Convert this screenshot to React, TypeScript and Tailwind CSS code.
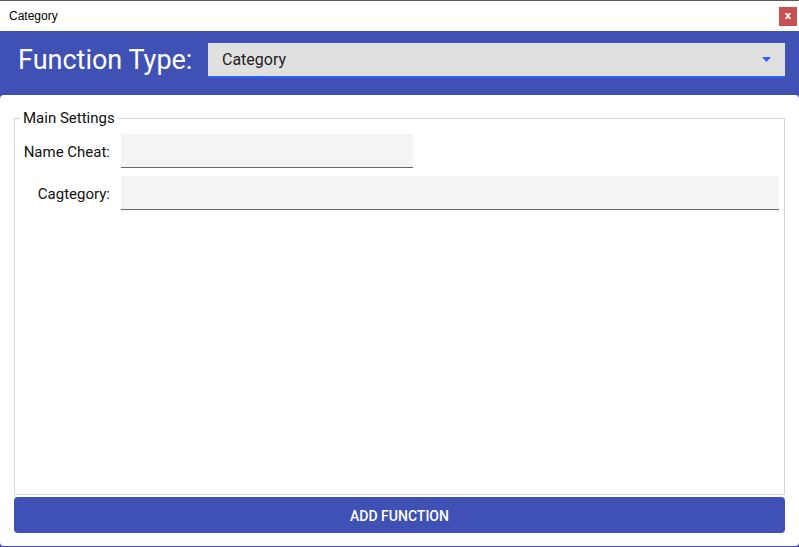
import React from 'react';

export default function App() {
  return (
    <div className="w-[799px] h-[547px] flex flex-col bg-[#3f51b5] font-['Roboto',sans-serif] overflow-hidden">
      {/* window title bar */}
      <div className="h-[31px] shrink-0 bg-white border-t border-[#5a5a5a] flex items-center justify-between pl-[9px] pr-[2px]">
        <span className="text-[12px] text-black font-['Liberation_Sans',sans-serif] leading-none">Category</span>
        <button className="w-[18px] h-[19px] bg-[#c75050] text-white text-[10px] font-bold leading-none flex items-center justify-center font-['DejaVu_Sans',sans-serif]">
          x
        </button>
      </div>

      {/* header */}
      <div className="h-[64px] shrink-0 flex items-start pt-[12px] pl-[18px] pr-[14px]">
        <span className="text-white text-[27px] leading-[35px] w-[190px] shrink-0">Function Type:</span>
        <div className="flex-1 h-[35px] bg-[#e0e0e0] border-b-2 border-[#2962ff] flex items-center justify-between pl-[14px] pr-[14px]">
          <span className="text-[16px] text-[#222]">Category</span>
          <svg width="9" height="5" viewBox="0 0 9 5">
            <path d="M0 0 H9 L4.5 5 Z" fill="#2962ff" />
          </svg>
        </div>
      </div>

      {/* main panel */}
      <div className="flex-1 bg-white rounded-[4px] mb-[1px] flex flex-col px-[14px] pt-[14px] pb-[13px]">
        <fieldset className="flex-1 border border-[#d5d5d5] px-0 m-0">
          <legend className="ml-[5px] px-[3px] text-[15px] leading-[18px] text-[#111]">Main Settings</legend>
          <div className="flex flex-col gap-[8px] pt-[7px] pr-[5px]">
            <div className="flex items-center">
              <label className="w-[95px] text-right text-[15px] text-[#111] pt-[2px]">Name Cheat:</label>
              <div className="ml-[11px] w-[292px] h-[34px] bg-[#f4f4f4] border-b border-[#666]" />
            </div>
            <div className="flex items-center">
              <label className="w-[95px] text-right text-[15px] text-[#111] pt-[2px]">Cagtegory:</label>
              <div className="ml-[11px] flex-1 h-[34px] bg-[#f4f4f4] border-b border-[#666]" />
            </div>
          </div>
        </fieldset>
        <button className="mt-[2px] h-[36px] w-full bg-[#3f51b5] rounded-[4px] text-white text-[14px] font-medium pt-[2px]">
          ADD FUNCTION
        </button>
      </div>
    </div>
  );
}
